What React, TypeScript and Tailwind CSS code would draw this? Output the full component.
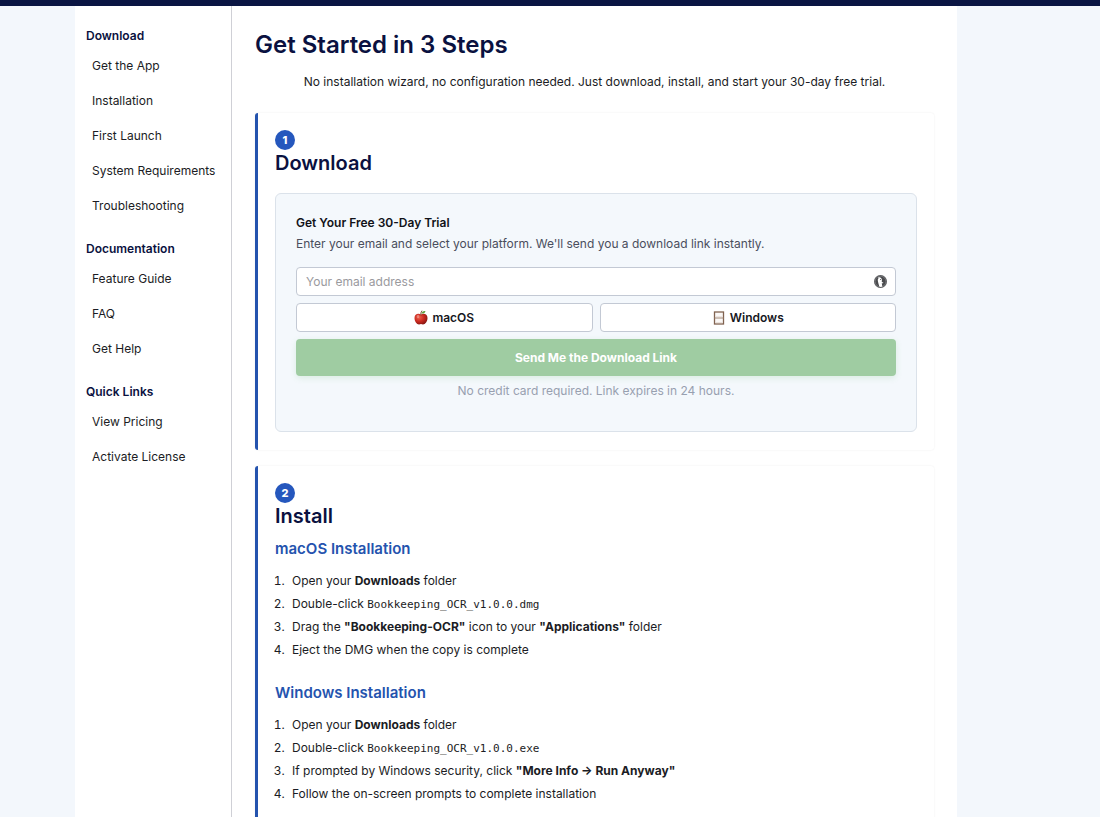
import { useState } from "react";
import type { ReactNode } from "react";

const NAV = [
  {
    title: "Download",
    links: ["Get the App", "Installation", "First Launch", "System Requirements", "Troubleshooting"],
  },
  { title: "Documentation", links: ["Feature Guide", "FAQ", "Get Help"] },
  { title: "Quick Links", links: ["View Pricing", "Activate License"] },
];

function AppleIcon() {
  return (
    <svg viewBox="0 0 28 30" className="h-[15px] w-[14px]" aria-hidden="true">
      <defs>
        <radialGradient id="apple" cx="0.35" cy="0.35" r="0.75">
          <stop offset="0" stopColor="#f0604c" />
          <stop offset="0.5" stopColor="#c92a20" />
          <stop offset="1" stopColor="#7d130f" />
        </radialGradient>
      </defs>
      <path
        d="M14 9C10 6 1 6.500 1 16c0 7 4.500 13 9 13 1.600 0 2.500-.8 4-.8s2.400.8 4 .8c4.500 0 9-6 9-13C27 6.500 18 6 14 9z"
        fill="url(#apple)"
      />
      <path d="M14 10c-.5-3-.5-5 1.500-8" stroke="#6b4226" strokeWidth="1.800" fill="none" strokeLinecap="round" />
      <path d="M15 7c1-4 4-5.500 8-5-1 4-4 5.500-8 5z" fill="#5f9e3a" />
      <ellipse cx="8" cy="13" rx="2.500" ry="3.500" fill="#fff" opacity="0.3" />
    </svg>
  );
}

function WindowIcon() {
  return (
    <svg viewBox="0 0 14 14" className="size-[14px]" aria-hidden="true">
      <rect x="2.500" y="1" width="9" height="12" fill="#fbf8f6" stroke="#80624f" strokeWidth="1.300" />
      <path d="M2.500 7h9" stroke="#a08674" strokeWidth="1" />
      <path d="M4 5.800h6M4 11.700h6" stroke="#d8c9bf" strokeWidth="0.600" />
    </svg>
  );
}

function DuckIcon() {
  return (
    <svg viewBox="0 0 26 26" className="size-[13px]" aria-hidden="true">
      <circle cx="13" cy="13" r="13" fill="#4a4b4e" />
      <circle cx="13" cy="13" r="11" fill="none" stroke="#a5a6a9" strokeWidth="1" />
      <path
        d="M8 5.500c2-1.500 5-1 6.500 1 1.600 2.200 1.500 5 1 7.500l3 .8c.5 1.400-1.600 2-3 1.900.5 2 1 4.500 1.200 6.500-2.200.8-4.200.7-6.200 0C9.500 18.500 7.500 13 7.500 9.500c0-1.200 1-2 1.500-2.300z"
        fill="#fff"
      />
      <circle cx="13" cy="9" r="1" fill="#444" />
    </svg>
  );
}

function Step({ number, title, children }: { number: number; title: string; children: ReactNode }) {
  return (
    <section className="rounded-[3px] border-l-[3px] border-[#2453ae] bg-white px-[17px] pt-[17px] pb-[18px] shadow-[0_0_2px_rgba(0,0,0,0.08)]">
      <span className="flex size-5 items-center justify-center rounded-full bg-[#2557bd] text-[11px] font-extrabold text-white">
        {number}
      </span>
      <h2 className="text-xl leading-[26px] font-semibold text-[#0a1140]">{title}</h2>
      {children}
    </section>
  );
}

function FileName({ children }: { children: ReactNode }) {
  return <code className="font-['DejaVu_Sans_Mono',monospace] text-[11px] leading-none">{children}</code>;
}

function Instructions({ title, items }: { title: string; items: ReactNode[] }) {
  return (
    <div>
      <h3 className="text-[15px] leading-6 font-semibold text-[#2453ae]">{title}</h3>
      <ol className="mt-2 list-decimal pl-[13px] leading-[23px]">
        {items.map((item, i) => (
          <li key={i} className="pl-1">
            {item}
          </li>
        ))}
      </ol>
    </div>
  );
}

export default function App() {
  const [email, setEmail] = useState("");

  const platformClass =
    "flex h-[29px] flex-1 items-center justify-center gap-1 rounded-[4px] border border-[#c3c9d4] bg-white font-semibold text-[#16171d]";

  return (
    <div className="flex min-h-screen flex-col bg-[#f3f7fc] font-['Inter','Liberation_Sans',sans-serif] text-xs text-[#1b1c24]">
      <header className="h-[6px] bg-[#0a1543]" />

      <div className="mr-[143px] ml-[75px] flex flex-1 bg-white">
        <nav className="w-[157px] shrink-0 border-r border-[#cfd0d6] pt-5 pl-[11px]">
          {NAV.map((group) => (
            <div key={group.title} className="mb-4">
              <h4 className="leading-5 font-semibold text-[#0a1140]">{group.title}</h4>
              <ul className="pt-[2px] pl-[6px]">
                {group.links.map((link) => (
                  <li key={link} className="leading-[35px]">
                    <a href="#">{link}</a>
                  </li>
                ))}
              </ul>
            </div>
          ))}
        </nav>

        <main className="min-w-0 flex-1 px-[23px] pt-[22px]">
          <h1 className="text-2xl leading-[34px] font-semibold text-[#0a1140]">Get Started in 3 Steps</h1>
          <p className="mt-2 text-center leading-[23px]">
            No installation wizard, no configuration needed. Just download, install, and start your 30-day free trial.
          </p>

          <div className="mt-5 flex flex-col gap-4">
            <Step number={1} title="Download">
              <form
                className="mt-[17px] rounded-md border border-[#dbe2ea] bg-[#f4f8fc] px-5 pt-[19px] pb-[29px]"
                onSubmit={(e) => e.preventDefault()}
              >
                <label htmlFor="email" className="block leading-5 font-semibold text-[#111218]">
                  Get Your Free 30-Day Trial
                </label>
                <p className="leading-[22px] text-[#4a4e5c]">
                  Enter your email and select your platform. We'll send you a download link instantly.
                </p>

                <div className="relative mt-3">
                  <input
                    id="email"
                    type="email"
                    value={email}
                    onChange={(e) => setEmail(e.target.value)}
                    placeholder="Your email address"
                    className="block h-[29px] w-full rounded-[4px] border border-[#c3c9d4] bg-white px-[9px] placeholder:text-[#9a9a9e]"
                  />
                  <span className="absolute inset-y-0 right-[9px] flex items-center">
                    <DuckIcon />
                  </span>
                </div>

                <div className="mt-[7px] flex gap-[7px]">
                  <button type="button" className={platformClass}>
                    <AppleIcon /> macOS
                  </button>
                  <button type="button" className={platformClass}>
                    <WindowIcon /> Windows
                  </button>
                </div>

                <button
                  type="submit"
                  className="mt-[7px] h-[37px] w-full rounded-[4px] bg-[#9fcca2] font-bold text-white shadow-[0_2px_6px_rgba(76,175,80,0.15)]"
                >
                  Send Me the Download Link
                </button>
                <p className="mt-1 text-center leading-[22px] text-[#98a0b0]">
                  No credit card required. Link expires in 24 hours.
                </p>
              </form>
            </Step>

            <Step number={2} title="Install">
              <div className="mt-2 flex flex-col gap-5">
                <Instructions
                  title="macOS Installation"
                  items={[
                    <>Open your <strong>Downloads</strong> folder</>,
                    <>Double-click <FileName>Bookkeeping_OCR_v1.0.0.dmg</FileName></>,
                    <>Drag the <strong>"Bookkeeping-OCR"</strong> icon to your <strong>"Applications"</strong> folder</>,
                    "Eject the DMG when the copy is complete",
                  ]}
                />
                <Instructions
                  title="Windows Installation"
                  items={[
                    <>Open your <strong>Downloads</strong> folder</>,
                    <>Double-click <FileName>Bookkeeping_OCR_v1.0.0.exe</FileName></>,
                    <>If prompted by Windows security, click <strong>"More Info → Run Anyway"</strong></>,
                    "Follow the on-screen prompts to complete installation",
                  ]}
                />
              </div>
            </Step>
          </div>
        </main>
      </div>
    </div>
  );
}
